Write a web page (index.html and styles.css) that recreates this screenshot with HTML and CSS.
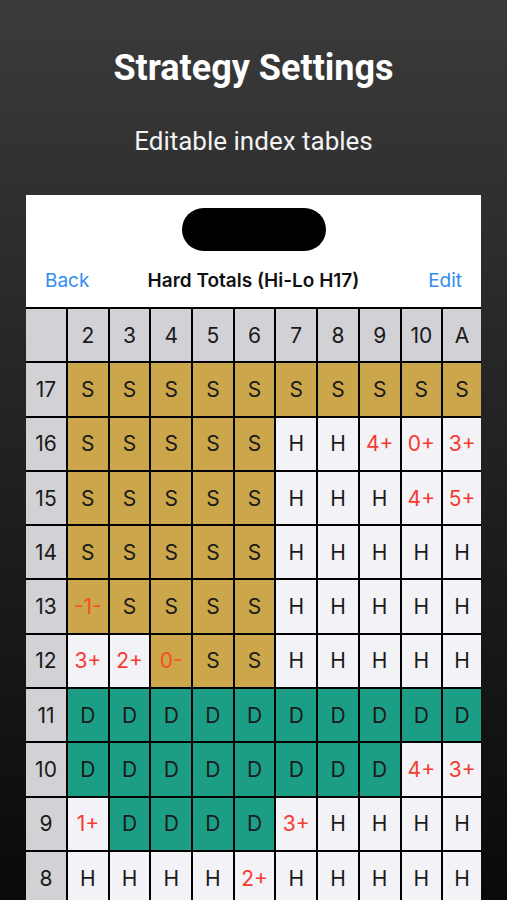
FILE: index.html
```html
<!DOCTYPE html>
<html lang="en">
<head>
    <meta charset="UTF-8">
    <meta name="viewport" content="width=device-width, initial-scale=1.0">
    <title>Strategy Settings</title>
    <link rel="stylesheet" href="styles.css">
</head>
<body>
    <div class="page">
        <h1 class="title">Strategy Settings</h1>
        <p class="subtitle">Editable index tables</p>

        <div class="phone">
            <div class="topbar">
                <div class="island"></div>
                <div class="nav">
                    <span class="nav-link">Back</span>
                    <span class="nav-title">Hard Totals (Hi-Lo H17)</span>
                    <span class="nav-link right">Edit</span>
                </div>
            </div>

            <div class="grid">
                <div class="cell head"></div>
                <div class="cell head">2</div>
                <div class="cell head">3</div>
                <div class="cell head">4</div>
                <div class="cell head">5</div>
                <div class="cell head">6</div>
                <div class="cell head">7</div>
                <div class="cell head">8</div>
                <div class="cell head">9</div>
                <div class="cell head">10</div>
                <div class="cell head">A</div>

                <!-- 17 -->
                <div class="cell head">17</div>
                <div class="cell stand">S</div>
                <div class="cell stand">S</div>
                <div class="cell stand">S</div>
                <div class="cell stand">S</div>
                <div class="cell stand">S</div>
                <div class="cell stand">S</div>
                <div class="cell stand">S</div>
                <div class="cell stand">S</div>
                <div class="cell stand">S</div>
                <div class="cell stand">S</div>

                <!-- 16 -->
                <div class="cell head">16</div>
                <div class="cell stand">S</div>
                <div class="cell stand">S</div>
                <div class="cell stand">S</div>
                <div class="cell stand">S</div>
                <div class="cell stand">S</div>
                <div class="cell hit">H</div>
                <div class="cell hit">H</div>
                <div class="cell hit red">4+</div>
                <div class="cell hit red">0+</div>
                <div class="cell hit red">3+</div>

                <!-- 15 -->
                <div class="cell head">15</div>
                <div class="cell stand">S</div>
                <div class="cell stand">S</div>
                <div class="cell stand">S</div>
                <div class="cell stand">S</div>
                <div class="cell stand">S</div>
                <div class="cell hit">H</div>
                <div class="cell hit">H</div>
                <div class="cell hit">H</div>
                <div class="cell hit red">4+</div>
                <div class="cell hit red">5+</div>

                <!-- 14 -->
                <div class="cell head">14</div>
                <div class="cell stand">S</div>
                <div class="cell stand">S</div>
                <div class="cell stand">S</div>
                <div class="cell stand">S</div>
                <div class="cell stand">S</div>
                <div class="cell hit">H</div>
                <div class="cell hit">H</div>
                <div class="cell hit">H</div>
                <div class="cell hit">H</div>
                <div class="cell hit">H</div>

                <!-- 13 -->
                <div class="cell head">13</div>
                <div class="cell stand orange">-1-</div>
                <div class="cell stand">S</div>
                <div class="cell stand">S</div>
                <div class="cell stand">S</div>
                <div class="cell stand">S</div>
                <div class="cell hit">H</div>
                <div class="cell hit">H</div>
                <div class="cell hit">H</div>
                <div class="cell hit">H</div>
                <div class="cell hit">H</div>

                <!-- 12 -->
                <div class="cell head">12</div>
                <div class="cell hit red">3+</div>
                <div class="cell hit red">2+</div>
                <div class="cell stand orange">0-</div>
                <div class="cell stand">S</div>
                <div class="cell stand">S</div>
                <div class="cell hit">H</div>
                <div class="cell hit">H</div>
                <div class="cell hit">H</div>
                <div class="cell hit">H</div>
                <div class="cell hit">H</div>

                <!-- 11 -->
                <div class="cell head">11</div>
                <div class="cell double">D</div>
                <div class="cell double">D</div>
                <div class="cell double">D</div>
                <div class="cell double">D</div>
                <div class="cell double">D</div>
                <div class="cell double">D</div>
                <div class="cell double">D</div>
                <div class="cell double">D</div>
                <div class="cell double">D</div>
                <div class="cell double">D</div>

                <!-- 10 -->
                <div class="cell head">10</div>
                <div class="cell double">D</div>
                <div class="cell double">D</div>
                <div class="cell double">D</div>
                <div class="cell double">D</div>
                <div class="cell double">D</div>
                <div class="cell double">D</div>
                <div class="cell double">D</div>
                <div class="cell double">D</div>
                <div class="cell hit red">4+</div>
                <div class="cell hit red">3+</div>

                <!-- 9 -->
                <div class="cell head">9</div>
                <div class="cell hit red">1+</div>
                <div class="cell double">D</div>
                <div class="cell double">D</div>
                <div class="cell double">D</div>
                <div class="cell double">D</div>
                <div class="cell hit red">3+</div>
                <div class="cell hit">H</div>
                <div class="cell hit">H</div>
                <div class="cell hit">H</div>
                <div class="cell hit">H</div>

                <!-- 8 -->
                <div class="cell head">8</div>
                <div class="cell hit">H</div>
                <div class="cell hit">H</div>
                <div class="cell hit">H</div>
                <div class="cell hit">H</div>
                <div class="cell hit red">2+</div>
                <div class="cell hit">H</div>
                <div class="cell hit">H</div>
                <div class="cell hit">H</div>
                <div class="cell hit">H</div>
                <div class="cell hit">H</div>
            </div>
        </div>
    </div>
</body>
</html>
```

FILE: styles.css
```css
body {
    margin: 0;
    height: 900px;
    overflow: hidden;
    font-family: 'Roboto', sans-serif;
    background: linear-gradient(180deg, #3b3b3b 0%, #262626 40%, #0a0a0a 100%);
}

.page {
    display: flex;
    flex-direction: column;
    align-items: center;
}

.title {
    margin: 45px 0 0 0;
    color: white;
    font-size: 36px;
    font-weight: 700;
    line-height: 46px;
}

.subtitle {
    margin: 35px 0 0 0;
    color: #f2f2f2;
    font-size: 26px;
    line-height: 30px;
}

.phone {
    margin-top: 39px;
    width: 455px;
    font-family: 'Inter', sans-serif;
}

.topbar {
    background: white;
    height: 112px;
    display: flex;
    flex-direction: column;
    align-items: center;
}

.island {
    margin-top: 13px;
    width: 144px;
    height: 43px;
    border-radius: 22px;
    background: black;
}

.nav {
    width: 100%;
    box-sizing: border-box;
    padding: 0 19px;
    margin-top: 18px;
    display: grid;
    grid-template-columns: 1fr auto 1fr;
    align-items: center;
}

.nav-link {
    color: #2f8cf0;
    font-size: 19px;
}

.nav-link.right {
    text-align: right;
}

.nav-title {
    color: #111;
    font-size: 19px;
    font-weight: 600;
}

.grid {
    display: grid;
    grid-template-columns: 40px repeat(9, 39.7px) 1fr;
    grid-auto-rows: 52.3px;
    gap: 2px;
    padding-top: 2px;
    background: #000;
}

.cell {
    display: flex;
    align-items: center;
    justify-content: center;
    font-size: 21px;
    color: #1a1a1a;
}

.head {
    background: #d1d1d6;
}

.stand {
    background: #cba64b;
}

.double {
    background: #1b9e85;
}

.hit {
    background: #f2f2f7;
}

.red {
    color: #f43b31;
}

.orange {
    color: #f4521f;
}
```
